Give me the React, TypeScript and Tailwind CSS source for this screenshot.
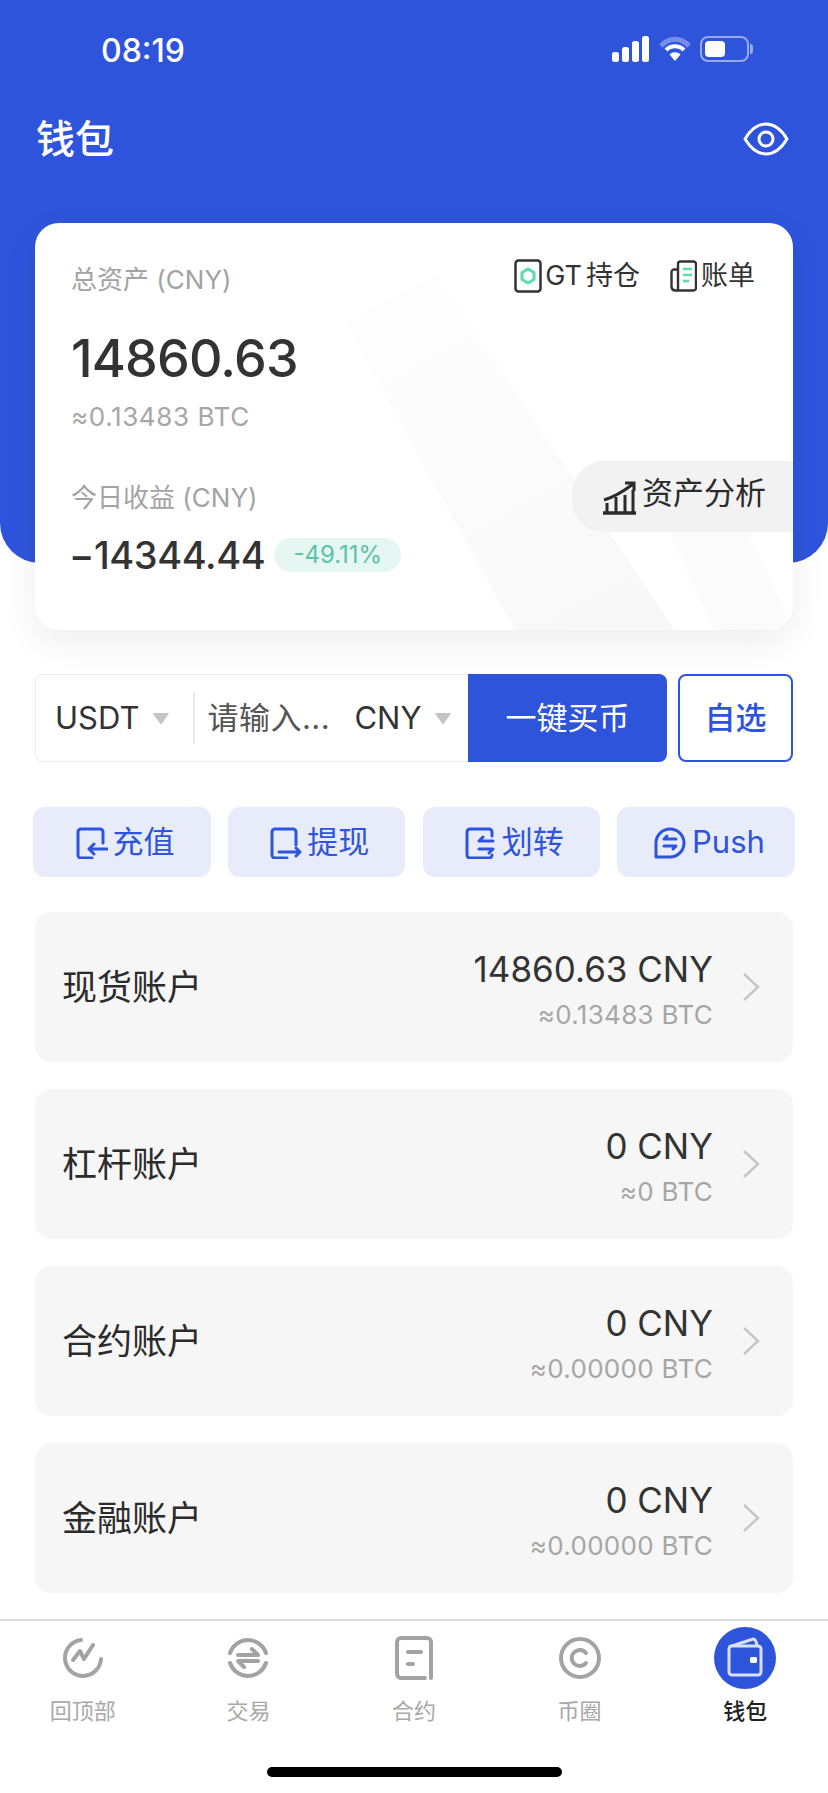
import React from "react";

const FONT = { fontFamily: 'Inter, "Noto Sans CJK SC", "Liberation Sans", sans-serif' };

function Caret() {
  return (
    <svg width="18" height="13" viewBox="0 0 18 13" className="shrink-0">
      <path d="M1.5 1.5h15L9 12z" fill="#c4c4c4" stroke="#c4c4c4" strokeLinejoin="round" />
    </svg>
  );
}

function Chevron() {
  return (
    <svg width="20" height="30" viewBox="0 0 20 30" fill="none" className="shrink-0">
      <path d="M3 2l14 13L3 28" stroke="#c6c6c6" strokeWidth="2.4" />
    </svg>
  );
}

function ActionIcon({ kind }: { kind: string }) {
  const c = "#2f54dc";
  if (kind === "push")
    return (
      <svg width="34" height="34" viewBox="0 0 34 34" fill="none" stroke={c} strokeWidth="3" strokeLinecap="round" strokeLinejoin="round">
        <path d="M3 31V17A14 14 0 1 1 17 31z" />
        <path d="M11 13h12M11 13l3-3" />
        <path d="M23 20H11M23 20l-3 3" />
      </svg>
    );
  if (kind === "in")
    return (
      <svg width="32" height="32" viewBox="0 0 32 32" fill="none" stroke={c} strokeWidth="3" strokeLinecap="round" strokeLinejoin="round">
        <path d="M27 16V5a3 3 0 0 0-3-3H5a3 3 0 0 0-3 3v23a3 3 0 0 0 3 3h11" />
        <path d="M31 22H13M18 17l-5 5 5 5" />
      </svg>
    );
  if (kind === "out")
    return (
      <svg width="32" height="32" viewBox="0 0 32 32" fill="none" stroke={c} strokeWidth="3" strokeLinecap="round" strokeLinejoin="round">
        <path d="M26 18V5a3 3 0 0 0-3-3H5a3 3 0 0 0-3 3v23a3 3 0 0 0 3 3h12" />
        <path d="M9 25h21M26 21l4 4-4 4" />
      </svg>
    );
  return (
    <svg width="32" height="32" viewBox="0 0 32 32" fill="none" stroke={c} strokeWidth="3" strokeLinecap="round" strokeLinejoin="round">
      <path d="M27 9V5a3 3 0 0 0-3-3H5a3 3 0 0 0-3 3v23a3 3 0 0 0 3 3h19a3 3 0 0 0 3-3" />
      <path d="M28 14H14l4-4M14 22h14l-4 4" />
    </svg>
  );
}

function Action({ kind, label, w }: { kind: string; label: string; w: string }) {
  return (
    <div className={`${w} h-[70px] pl-[6px] pt-[1px] rounded-xl bg-[#e8ecfa] flex items-center justify-center gap-[5px] text-[#2f54dc] text-[31px]`}>
      <ActionIcon kind={kind} />
      <span>{label}</span>
    </div>
  );
}

function AccountRow({ name, value, btc }: { name: string; value: string; btc: string }) {
  return (
    <div className="h-[150px] rounded-2xl bg-[#f6f6f6] flex items-center pl-[27px] pr-[32px]">
      <span className="text-[#2b2b2b] text-[35px] leading-none flex-1">{name}</span>
      <div className="flex flex-col items-end mr-[28px] pt-[4px]">
        <span className="text-[#333333] text-[35px] leading-[42px]">{value}</span>
        <span className="text-[#a6a6a6] text-[26px] leading-[30px] mt-[10px] tracking-[0.3px]">{btc}</span>
      </div>
      <Chevron />
    </div>
  );
}

function Tab({ label, active, children }: { label: string; active?: boolean; children: React.ReactNode }) {
  return (
    <div className="flex-1 flex flex-col items-center">
      <div className="h-[68px] flex items-center justify-center">{children}</div>
      <span className={`text-[22px] leading-7 mt-[5px] ${active ? "text-[#222222] font-medium" : "text-[#a8a8a8]"}`}>{label}</span>
    </div>
  );
}

export default function App() {
  return (
    <div style={FONT} className="w-[828px] h-[1793px] bg-white overflow-hidden flex flex-col relative">
      <header className="h-[563px] shrink-0 bg-[#2f54dc] rounded-b-[40px] text-white px-[36px] flex flex-col">
        <div className="h-[100px] pt-[31px] flex items-start justify-between">
          <span className="ml-[65px] text-[32px] leading-[40px] font-medium">08:19</span>
          <div className="flex items-center gap-[8px] mt-[5px] mr-[39px]">
            <svg width="38" height="26" viewBox="0 0 38 26" fill="#fff">
              <rect x="0" y="16" width="7" height="10" rx="2.5" />
              <rect x="10" y="11" width="7" height="15" rx="2.5" />
              <rect x="20" y="5" width="7" height="21" rx="2.5" />
              <rect x="30" y="0" width="7" height="26" rx="2.5" />
            </svg>
            <svg width="34" height="26" viewBox="0 0 34 26" fill="none">
              <path d="M3 10C11 1 23 1 31 10" stroke="#fff" strokeOpacity="0.35" strokeWidth="5" />
              <path d="M8 14c5-5 13-5 18 0" stroke="#fff" strokeWidth="4" />
              <path d="M11.5 18.5c3-3 8-3 11 0L17 25z" fill="#fff" />
            </svg>
            <div className="flex items-center">
              <div className="w-[49px] h-[26px] rounded-[8px] border-2 border-white/50 p-[3px]">
                <div className="w-[20px] h-full rounded-[4px] bg-white" />
              </div>
              <div className="w-[3px] h-[10px] rounded-r bg-white/50 ml-[1px]" />
            </div>
          </div>
        </div>
        <div className="flex items-center justify-between mt-[16px]">
          <span className="text-[39px] leading-[46px] font-medium">钱包</span>
          <svg width="46" height="34" viewBox="0 0 46 34" fill="none" stroke="#fff" strokeWidth="3" className="mr-[3px]">
            <path d="M2 17C8 7 15 2 23 2s15 5 21 15c-6 10-13 15-21 15S8 27 2 17z" strokeLinejoin="round" />
            <circle cx="23" cy="17" r="7" />
          </svg>
        </div>
      </header>

      <main className="relative -mt-[340px] px-[35px] flex flex-col flex-1 min-h-0">
        <section className="relative h-[407px] shrink-0 rounded-[24px] bg-white shadow-[0_12px_36px_rgba(0,0,0,0.07)] overflow-hidden pl-[36px] pt-[37px]">
          <svg className="absolute inset-0 pointer-events-none" width="758" height="407" viewBox="0 0 758 407">
            <defs>
              <linearGradient id="wm" x1="0.2" y1="0" x2="0.7" y2="1">
                <stop offset="0" stopColor="#fefefe" />
                <stop offset="1" stopColor="#f8f8f8" />
              </linearGradient>
            </defs>
            <path d="M310 100L400 50 640 407H480z" fill="url(#wm)" />
            <path d="M620 280L700 280 758 407H680z" fill="#fbfbfb" />
          </svg>
          <div className="relative">
            <div className="flex items-center justify-between pr-[38px]">
              <span className="text-[#a3a3a3] text-[26px] leading-8 mt-[4px]">总资产 (CNY)</span>
              <div className="flex items-center text-[#333] text-[27px] leading-8 -mt-[4px]">
                <svg width="28" height="34" viewBox="0 0 28 34" fill="none" className="mr-[3px]">
                  <rect x="1.5" y="1.5" width="25" height="31" rx="3" stroke="#333" strokeWidth="2.5" />
                  <path d="M14 10l6 3.5v7L14 24l-6-3.5v-7z" stroke="#5cdcb0" strokeWidth="3" />
                </svg>
                <span>GT</span>
                <span className="ml-[4px]">持仓</span>
                <svg width="27" height="32" viewBox="0 0 27 32" fill="none" className="ml-[30px] mr-[4px]">
                  <path d="M8 9V4a2.5 2.5 0 0 1 2.5-2.5h13A2.5 2.5 0 0 1 26 4v24a2.5 2.5 0 0 1-2.5 2.5h-18A4 4 0 0 1 1.5 27V12A2.5 2.5 0 0 1 4 9.5h4V30" stroke="#333" strokeWidth="2.4" />
                  <path d="M13 9h9M13 15h9M13 21h6" stroke="#5cdcb0" strokeWidth="2.6" />
                </svg>
                <span>账单</span>
              </div>
            </div>
            <div className="text-[#333333] text-[52px] leading-[60px] mt-[33px] font-medium tracking-[-0.8px]">14860.63</div>
            <div className="text-[#a6a6a6] text-[26px] leading-8 mt-[12px] tracking-[0.6px]">≈0.13483 BTC</div>
            <div className="text-[#a3a3a3] text-[26px] leading-8 mt-[49px]">今日收益 (CNY)</div>
            <div className="flex items-center mt-[18px] -ml-[2px]">
              <span className="text-[#333333] text-[38px] leading-[46px] font-medium tracking-[-0.4px]">−14344.44</span>
              <span className="ml-[9px] h-[34px] w-[127px] rounded-[17px] bg-[#e6f6f3] text-[#5cc3a6] text-[24px] leading-[34px] text-center">-49.11%</span>
            </div>
          </div>
          <div className="absolute right-0 top-[238px] h-[71px] w-[221px] rounded-l-[32px] bg-[#f2f2f2] flex items-center pl-[30px] gap-[5px] text-[#2b2b2b] text-[31px]">
            <svg width="35" height="34" viewBox="0 0 35 34" fill="none" stroke="#2b2b2b" strokeWidth="3" className="mt-[2px]">
              <path d="M1 32h33" strokeWidth="3.5" />
              <path d="M5 31V22M14 31V16M23 31V14M31 31V9" />
              <path d="M2 19C12 16 22 10 31 3M23 2h9v8" />
            </svg>
            <span className="-mt-[6px]">资产分析</span>
          </div>
        </section>

        <div className="flex h-[88px] mt-[44px] shrink-0">
          <div className="w-[433px] rounded-l-lg border border-r-0 border-[#eeeeee] flex items-center text-[31px] text-[#333] whitespace-nowrap">
            <span className="ml-[19px]">USDT</span>
            <span className="ml-[13px]"><Caret /></span>
            <span className="ml-[23px] w-[2px] h-[52px] bg-[#e9e9e9]" />
            <span className="ml-[12px] w-[132px] text-[#555] tracking-[0.5px] overflow-hidden">请输入...</span>
            <span className="ml-[15px]">CNY</span>
            <span className="ml-[13px]"><Caret /></span>
          </div>
          <div className="w-[199px] bg-[#2f54dc] rounded-r-lg text-white text-[31px] flex items-center justify-center">一键买币</div>
          <div className="ml-[11px] w-[115px] rounded-lg border-2 border-[#2f54dc] text-[#2f54dc] text-[31px] font-medium flex items-center justify-center">自选</div>
        </div>

        <div className="flex justify-between mt-[45px] -mx-[2px] shrink-0">
          <Action kind="in" label="充值" w="w-[178px]" />
          <Action kind="out" label="提现" w="w-[177px]" />
          <Action kind="swap" label="划转" w="w-[177px]" />
          <Action kind="push" label="Push" w="w-[178px]" />
        </div>

        <div className="flex flex-col gap-[27px] mt-[35px]">
          <AccountRow name="现货账户" value="14860.63 CNY" btc="≈0.13483 BTC" />
          <AccountRow name="杠杆账户" value="0 CNY" btc="≈0 BTC" />
          <AccountRow name="合约账户" value="0 CNY" btc="≈0.00000 BTC" />
          <AccountRow name="金融账户" value="0 CNY" btc="≈0.00000 BTC" />
        </div>
      </main>

      <footer className="absolute left-0 right-0 bottom-0 h-[174px] bg-white border-t-2 border-[#dcdcdc]">
        <div className="flex px-0 pt-[3px]">
          <Tab label="回顶部">
            <svg width="42" height="42" viewBox="0 0 42 42" fill="none" stroke="#a3a3a3" strokeWidth="4" strokeLinecap="round" strokeLinejoin="round">
              <path d="M19 3A18 18 0 1 0 39 22" />
              <path d="M11 23l7-9 4 8 9-14" />
            </svg>
          </Tab>
          <Tab label="交易">
            <svg width="42" height="42" viewBox="0 0 42 42" fill="none" stroke="#a3a3a3" strokeWidth="4" strokeLinecap="round">
              <path d="M3 16A19 19 0 0 1 39 16M39 26A19 19 0 0 1 3 26" />
              <path d="M11 18h20l-6-6M31 24H11l6 6" strokeLinejoin="round" />
            </svg>
          </Tab>
          <Tab label="合约">
            <svg width="38" height="44" viewBox="0 0 38 44" fill="none" stroke="#a3a3a3" strokeWidth="4" strokeLinecap="round">
              <path d="M36 42V6a4 4 0 0 0-4-4H6a4 4 0 0 0-4 4v32a4 4 0 0 0 4 4h24" />
              <path d="M13 16h13M13 28h5" />
            </svg>
          </Tab>
          <Tab label="币圈">
            <svg width="42" height="42" viewBox="0 0 42 42" fill="none" stroke="#a3a3a3" strokeWidth="4" strokeLinecap="round">
              <circle cx="21" cy="21" r="19" />
              <path d="M27 16a8 8 0 1 0 0 10" />
            </svg>
          </Tab>
          <Tab label="钱包" active>
            <svg width="62" height="62" viewBox="0 0 62 62">
              <circle cx="31" cy="31" r="31" fill="#2f54dc" />
              <path d="M15 20l24-8c2 0 3 1 4 6" fill="none" stroke="#d8e0fb" strokeWidth="3" />
              <rect x="15" y="19" width="32" height="29" rx="3" fill="#2f54dc" stroke="#d8e0fb" strokeWidth="3" />
              <rect x="36" y="30" width="7" height="6" rx="1.5" fill="#fff" />
            </svg>
          </Tab>
        </div>
        <div className="absolute bottom-[16px] left-[267px] w-[295px] h-[10px] rounded-full bg-black" />
      </footer>
    </div>
  );
}
